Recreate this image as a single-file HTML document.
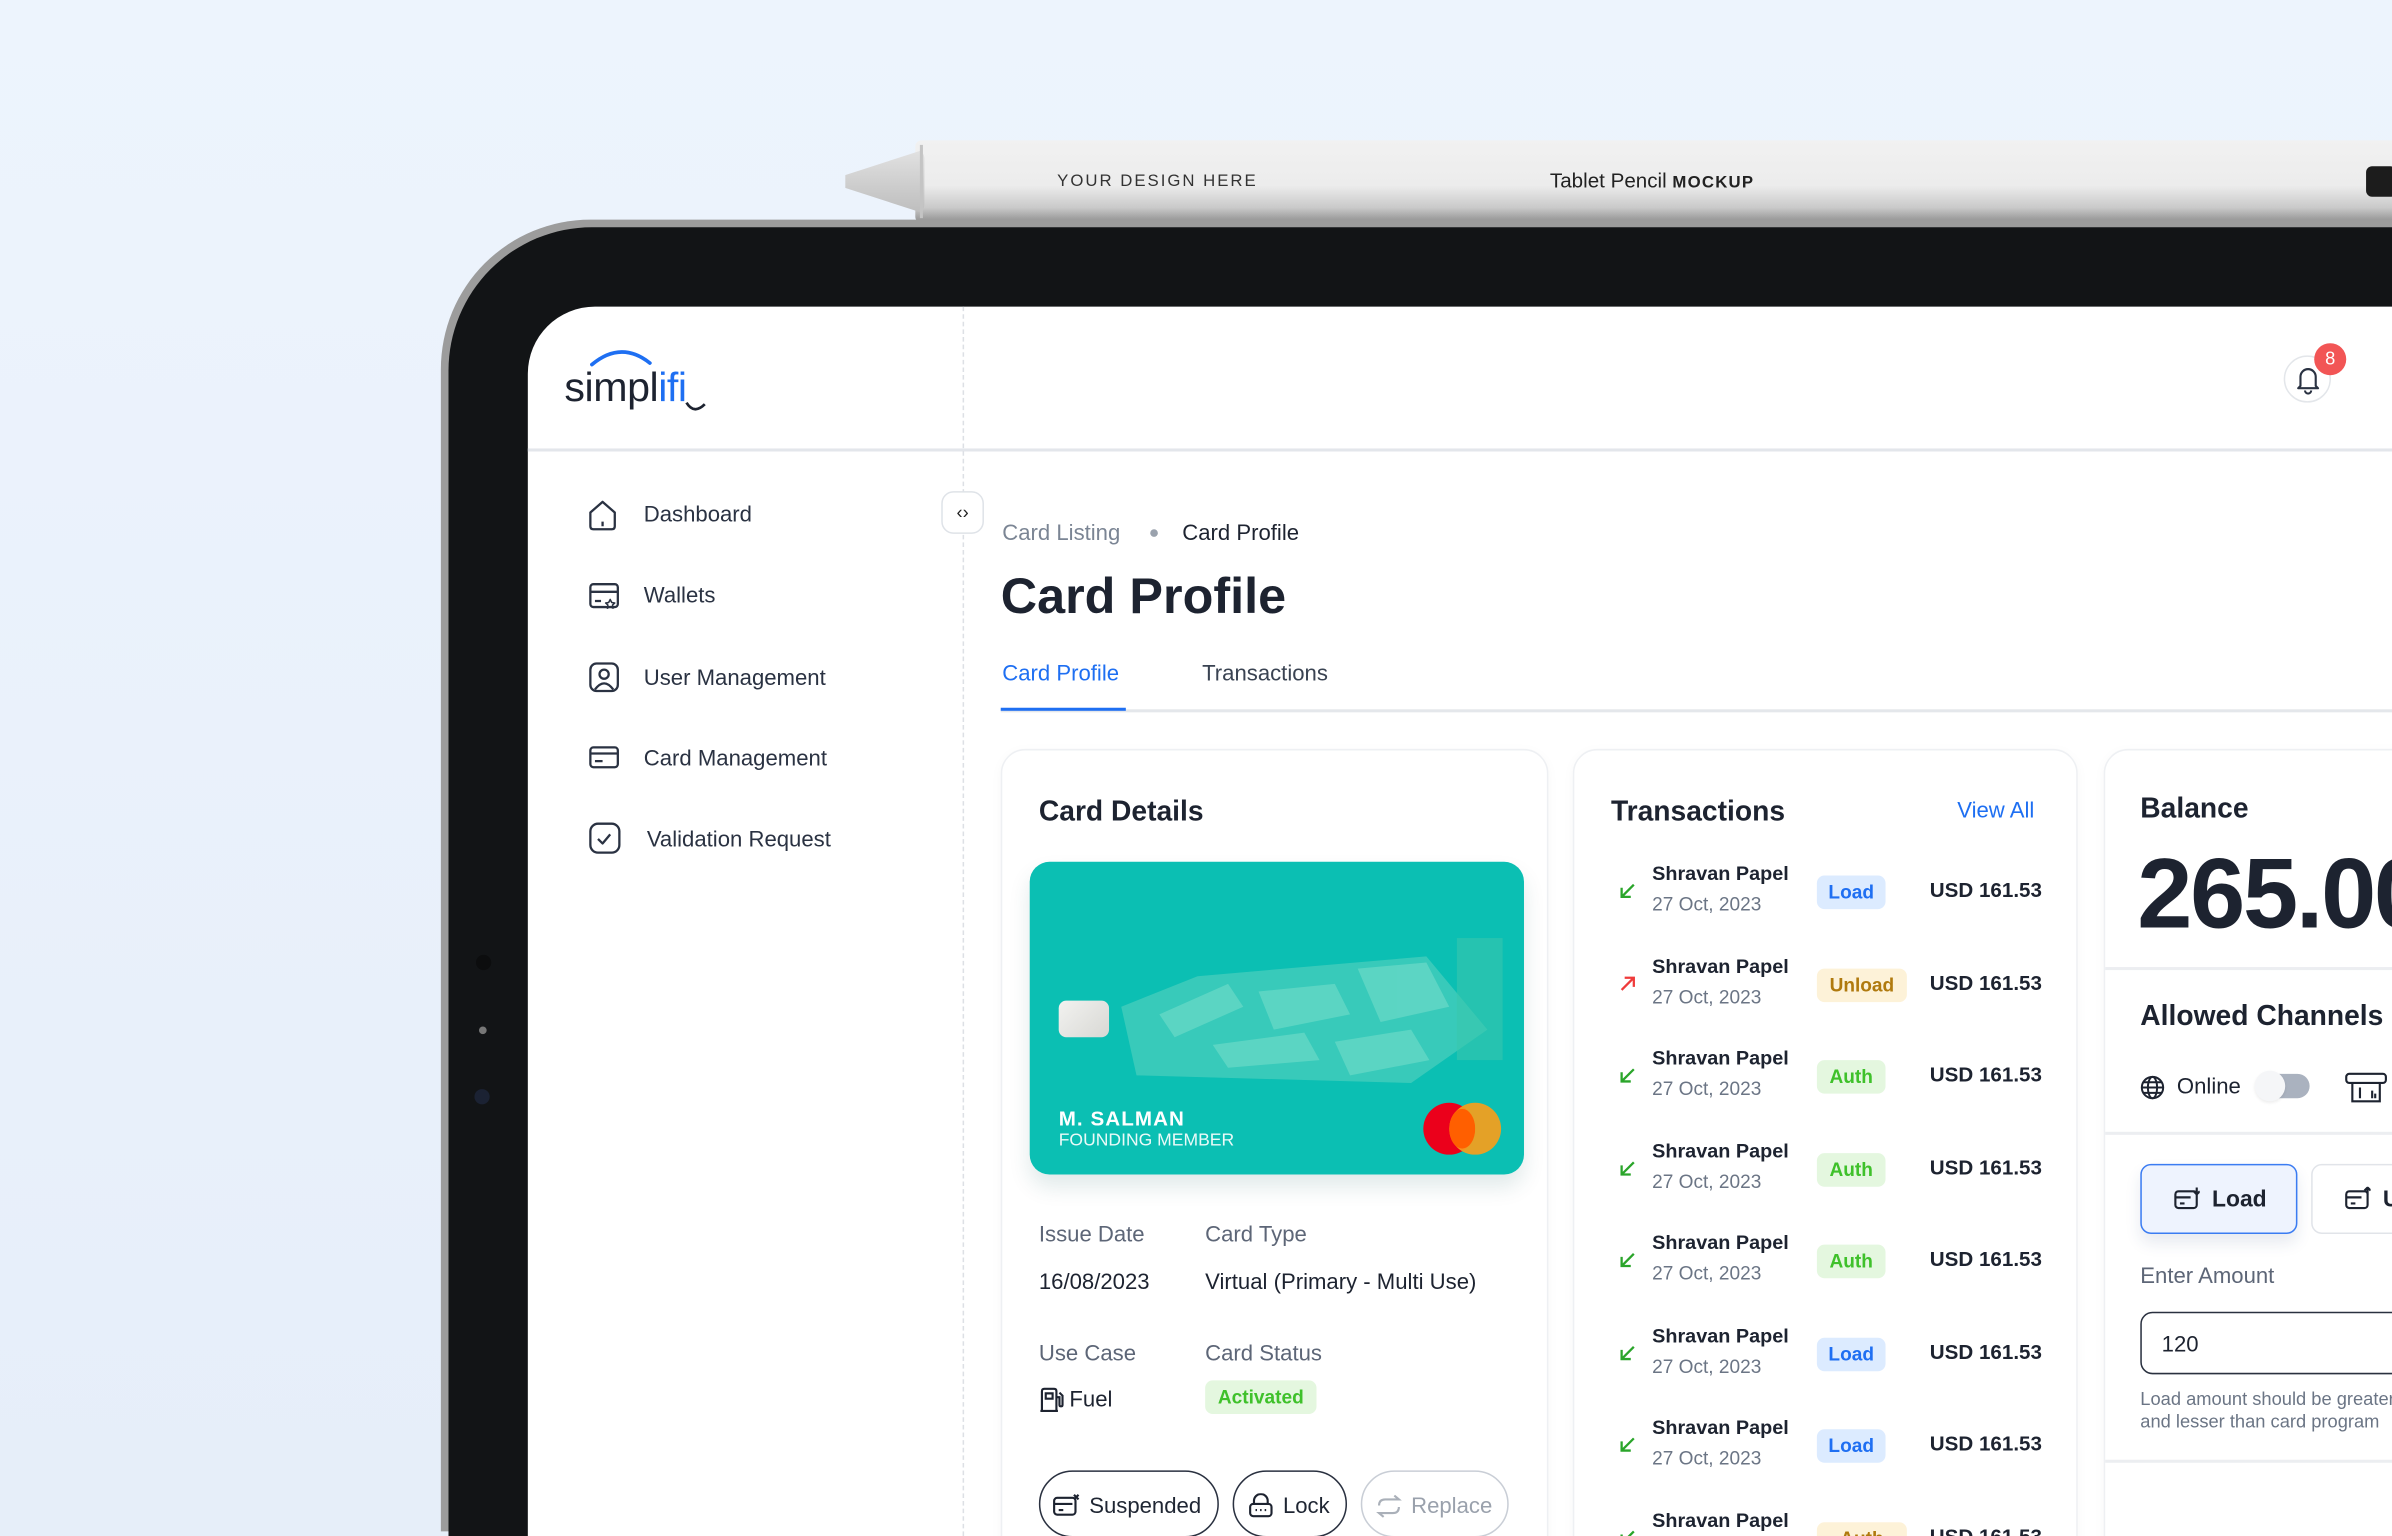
<!DOCTYPE html>
<html><head><meta charset="utf-8"><style>
html,body{margin:0;padding:0;width:2392px;height:1536px;overflow:hidden;background:#edf3fb}
#s{position:absolute;left:0;top:0;width:1568px;height:1007px;transform:scale(1.52551,1.52532);transform-origin:0 0;font-family:"Liberation Sans",sans-serif;color:#1f2633;overflow:hidden;background:linear-gradient(180deg,#edf4fd 0%,#e6eef9 100%)}
.a{position:absolute}
.t{position:absolute;white-space:nowrap}
.nav{font-size:14.5px;color:#2a3242}
.panel{position:absolute;background:#fff;border:1px solid #eef0f3;border-radius:16px;box-shadow:0 2px 8px rgba(20,30,50,.03)}
.h{font-weight:bold;font-size:18.5px;color:#1d2330}
.lbl{font-size:14.5px;color:#5d6677}
.val{font-size:14.5px;color:#1d2330}
.nm{font-size:13px;font-weight:bold;color:#1d2330}
.dt{font-size:12.5px;color:#6b7585}
.amt{font-size:13.5px;font-weight:bold;color:#1d2330}
.bd{position:absolute;height:22px;line-height:22px;border-radius:5px;font-size:12.5px;font-weight:bold;text-align:center}
.ld{background:#dcebff;color:#1f6ff2;width:45px}
.au{background:#e4f7df;color:#3fc12b;width:45px}
.ul{background:#fdf2d8;color:#b07a0e;width:59px}
.pill{position:absolute;height:44px;border:1.5px solid #2a3140;border-radius:23px;font-size:14.5px;line-height:44px;box-sizing:border-box}
</style></head><body><div id="s">

<!-- pencil -->
<div class="a" style="left:600px;top:92px;width:1000px;height:54px;background:linear-gradient(180deg,#f1f1f1 0%,#ececec 55%,#c9c9c9 82%,#8e8e8e 100%);border-radius:4px 0 0 4px"></div>
<div class="a" style="left:554px;top:98px;width:52px;height:42px;background:linear-gradient(180deg,#e2e2e2,#bdbdbd);clip-path:polygon(0 40%,100% 0,100% 100%,0 60%);border-radius:6px"></div>
<div class="a" style="left:603px;top:95px;width:2px;height:48px;background:#c4c4c4"></div>
<div class="t" style="left:693px;top:113px;font-size:11px;letter-spacing:1.3px;color:#333">YOUR DESIGN HERE</div>
<div class="t" style="left:1016px;top:111px;font-size:13.5px;color:#222">Tablet Pencil <b style="font-size:11px;letter-spacing:.8px">MOCKUP</b></div>
<div class="a" style="left:1551px;top:109px;width:20px;height:20px;background:#1c1c1c;border-radius:4px"></div>

<!-- tablet -->
<div class="a" style="left:289px;top:144px;width:1500px;height:860px;border-radius:98px 98px 0 0;background:#9c9c9c"></div>
<div class="a" style="left:294px;top:149px;width:1500px;height:858px;border-radius:94px 94px 0 0;background:#121416"></div>
<div class="a" style="left:312px;top:626px;width:10px;height:10px;border-radius:50%;background:#0c0d0e"></div>
<div class="a" style="left:314px;top:673px;width:5px;height:5px;border-radius:50%;background:#777"></div>
<div class="a" style="left:311px;top:714px;width:10px;height:10px;border-radius:50%;background:#1b2233"></div>
<div class="a" style="left:346px;top:201px;width:1240px;height:806px;border-radius:44px 0 0 0;background:#fff"></div>

<!-- header -->
<div class="a" style="left:346px;top:294px;width:1222px;height:1.5px;background:#e3e6eb"></div>
<div class="a" style="left:631px;top:201px;width:0;height:806px;border-left:1px dashed #dde0e5"></div>
<svg class="a" style="left:366px;top:222px" width="106" height="52"><path d="M22 17 Q41 1 60 16" stroke="#1e6ff2" stroke-width="2.4" fill="none" stroke-linecap="round"/><path d="M84 42 Q89 50 96 43" stroke="#1d2330" stroke-width="1.8" fill="none"/><text x="4" y="41" font-family="Liberation Sans,sans-serif" font-size="27" fill="#1d2330" letter-spacing="-.3">simpl<tspan fill="#1e6ff2">ifi</tspan></text></svg>
<div class="a" style="left:1497px;top:233px;width:31px;height:31px;border-radius:50%;border:1px solid #e3e6ea;box-sizing:border-box"></div>
<svg class="a" style="left:1504px;top:239px" width="18" height="20" viewBox="0 0 18 20"><path d="M4 14 V8 a5 5 0 0 1 10 0 V14 L15.5 15.5 H2.5 Z M7 17 a2 2 0 0 0 4 0" stroke="#2a3242" stroke-width="1.4" fill="none" stroke-linejoin="round"/></svg>
<div class="a" style="left:1517px;top:225px;width:21px;height:21px;border-radius:50%;background:#f25555;color:#fff;font-size:12px;text-align:center;line-height:21px">8</div>

<!-- sidebar -->
<svg class="a" style="left:384px;top:326px" width="24" height="240" fill="none" stroke="#2a3242" stroke-width="1.5" stroke-linejoin="round">
<path d="M3 10 L11 3 L19 10 V19 Q19 21 17 21 H5 Q3 21 3 19 Z M11 16 V19"/>
<rect x="3" y="57" width="18" height="15" rx="2"/><path d="M3 62 H21 M6 68 H10"/><path d="M16 67 l1 2 2 .3 -1.5 1.4 .4 2 -1.9-1 -1.9 1 .4-2 -1.5-1.4 2-.3z" stroke-width="1"/>
<rect x="3" y="109" width="18" height="18" rx="4"/><circle cx="12" cy="116" r="3"/><path d="M6 126 Q12 118 18 126"/>
<rect x="3" y="164" width="18" height="13" rx="2"/><path d="M3 168 H21 M6 173 H11"/>
<rect x="3" y="214" width="19" height="19" rx="5"/><path d="M8 224 L11 227 L16 221"/>
</svg>
<div class="t nav" style="left:422px;top:330px">Dashboard</div>
<div class="t nav" style="left:422px;top:383px">Wallets</div>
<div class="t nav" style="left:422px;top:437px">User Management</div>
<div class="t nav" style="left:422px;top:490px">Card Management</div>
<div class="t nav" style="left:424px;top:543px">Validation Request</div>
<div class="a" style="left:617px;top:322px;width:28px;height:28px;border:1px solid #dfe3e8;border-radius:8px;background:#fff;box-sizing:border-box;text-align:center;font-size:12px;line-height:26px;color:#222">&lsaquo;&rsaquo;</div>

<!-- main -->
<div class="t" style="left:657px;top:342px;font-size:14.5px;color:#7b8594">Card Listing</div>
<div class="a" style="left:754px;top:347px;width:5px;height:5px;border-radius:50%;background:#9aa2ad"></div>
<div class="t" style="left:775px;top:342px;font-size:14.5px;color:#1d2330">Card Profile</div>
<div class="t" style="left:656px;top:372px;font-size:33px;font-weight:bold;color:#1d2330">Card Profile</div>
<div class="t" style="left:657px;top:434px;font-size:14.5px;color:#1e6ff2">Card Profile</div>
<div class="t" style="left:788px;top:434px;font-size:14.5px;color:#3a4352">Transactions</div>
<div class="a" style="left:656px;top:465px;width:920px;height:1.5px;background:#e4e7eb"></div>
<div class="a" style="left:656px;top:464px;width:82px;height:2px;background:#1e6ff2"></div>

<!-- card details panel -->
<div class="panel" style="left:656px;top:491px;width:357px;height:530px"></div>
<div class="t h" style="left:681px;top:521px">Card Details</div>
<div class="a" style="left:675px;top:565px;width:324px;height:205px;border-radius:13px;background:#0bbfb3;overflow:hidden;box-shadow:0 8px 14px rgba(0,80,80,.12)">
<svg width="324" height="205" style="position:absolute;left:0;top:0"><g fill="#5fd3bf" opacity=".55"><polygon points="60,95 110,75 260,62 300,110 250,145 70,140"/></g><g fill="#7fe0cd" opacity=".5"><polygon points="85,100 130,80 140,95 95,115"/><polygon points="150,85 200,80 210,100 160,110"/><polygon points="215,70 260,66 275,95 230,105"/><polygon points="120,120 180,112 190,130 130,135"/><polygon points="200,118 250,110 262,130 210,140"/></g><g fill="#38c7ae" opacity=".6"><rect x="280" y="50" width="30" height="80"/></g></svg>
<div class="a" style="left:19px;top:91px;width:33px;height:24px;border-radius:5px;background:linear-gradient(135deg,#f2f2f0,#d8d8d4)"></div>
<div class="t" style="left:19px;top:161px;color:#fff;font-weight:bold;font-size:13.5px;letter-spacing:.7px">M. SALMAN</div>
<div class="t" style="left:19px;top:177px;color:#eafaf8;font-size:11.5px">FOUNDING MEMBER</div>
<div class="a" style="left:258px;top:158px;width:34px;height:34px;border-radius:50%;background:#eb001b"></div>
<div class="a" style="left:275px;top:158px;width:34px;height:34px;border-radius:50%;background:#f79e1b;opacity:.92"></div>
<div class="a" style="left:275px;top:162px;width:17px;height:26px;background:#ff5f00;clip-path:ellipse(50% 50%)"></div>
</div>
<div class="t lbl" style="left:681px;top:802px">Issue Date</div>
<div class="t lbl" style="left:790px;top:802px">Card Type</div>
<div class="t val" style="left:681px;top:833px">16/08/2023</div>
<div class="t val" style="left:790px;top:833px">Virtual (Primary - Multi Use)</div>
<div class="t lbl" style="left:681px;top:880px">Use Case</div>
<div class="t lbl" style="left:790px;top:880px">Card Status</div>
<svg class="a" style="left:681px;top:909px" width="17" height="17" fill="none" stroke="#1d2330" stroke-width="1.4"><path d="M2 16 V3 Q2 1.5 3.5 1.5 H10 Q11.5 1.5 11.5 3 V16 M1 16 H12.5 M4.5 4.5 H9 V8 H4.5 Z M11.5 7 H13.5 V12 Q13.5 13 14.5 13 Q15.5 13 15.5 12 V6 L13.5 4"/></svg>
<div class="t val" style="left:701px;top:910px">Fuel</div>
<div class="a" style="left:790px;top:905px;width:73px;height:22px;border-radius:5px;background:#e4f7df;color:#3fc12b;font-size:12.5px;font-weight:bold;text-align:center;line-height:22px">Activated</div>
<div class="pill" style="left:681px;top:964px;width:118px;padding-left:32px;line-height:46px">Suspended</div>
<svg class="a" style="left:690px;top:979px" width="18" height="16" fill="none" stroke="#1d2330" stroke-width="1.4"><rect x="1" y="3" width="14" height="11" rx="2"/><path d="M1 7 H13 M4 11 H7 M14 1 l3 3 M17 1 l-3 3"/></svg>
<div class="pill" style="left:808px;top:964px;width:75px;padding-left:32px;line-height:46px">Lock</div>
<svg class="a" style="left:818px;top:979px" width="17" height="16" fill="none" stroke="#1d2330" stroke-width="1.4"><path d="M4 7 V5 a4.5 4.5 0 0 1 9 0 V7"/><rect x="1.5" y="7" width="14" height="8" rx="2"/><path d="M5 11 h1 M8 11 h1 M11 11 h1"/></svg>
<div class="pill" style="left:892px;top:964px;width:97px;padding-left:32px;border-color:#c9ced6;color:#9aa1ac;line-height:46px">Replace</div>
<svg class="a" style="left:902px;top:980px" width="17" height="15" fill="none" stroke="#aab0b9" stroke-width="1.4"><path d="M2 7 Q2 3 6 3 H15 L12 0.5 M15 8 Q15 12 11 12 H2 L5 14.5"/></svg>

<!-- transactions panel -->
<div class="panel" style="left:1031px;top:491px;width:329px;height:530px"></div>
<div class="t h" style="left:1056px;top:521px">Transactions</div>
<div class="t" style="left:1283px;top:524px;font-size:14.5px;color:#1e6ff2">View All</div>

<div id="tx"></div>

<!-- balance panel -->
<div class="panel" style="left:1379px;top:491px;width:300px;height:530px"></div>
<div class="t h" style="left:1403px;top:519px">Balance</div>
<div class="t" style="left:1401px;top:548px;font-size:65px;font-weight:bold;color:#1d2330;letter-spacing:-1.5px">265.00</div>
<div class="a" style="left:1380px;top:634px;width:200px;height:1.5px;background:#eceef1"></div>
<div class="t h" style="left:1403px;top:655px">Allowed Channels</div>
<svg class="a" style="left:1403px;top:705px" width="16" height="16" fill="none" stroke="#1d2330" stroke-width="1.3"><circle cx="8" cy="8" r="7"/><ellipse cx="8" cy="8" rx="3" ry="7"/><path d="M1 8 H15 M2 4.5 H14 M2 11.5 H14"/></svg>
<div class="t val" style="left:1427px;top:705px">Online</div>
<div class="a" style="left:1481px;top:704px;width:33px;height:16px;border-radius:8px;background:#aab2bf"></div>
<div class="a" style="left:1478px;top:702px;width:20px;height:20px;border-radius:50%;background:#f5f6f8;box-shadow:0 1px 2px rgba(0,0,0,.08)"></div>
<svg class="a" style="left:1537px;top:703px" width="30" height="20" fill="none" stroke="#1d2330" stroke-width="1.4"><rect x="1" y="1" width="26" height="6" rx="2"/><path d="M5 7 V19 H23 V7 M10 10 V17 M18 12 V17 M20 14 V17"/></svg>
<div class="a" style="left:1380px;top:742px;width:200px;height:1.5px;background:#eceef1"></div>
<div class="a" style="left:1403px;top:763px;width:103px;height:46px;border:1.5px solid #3b7cf2;border-radius:7px;background:#eef3fe;box-sizing:border-box;box-shadow:0 6px 10px rgba(30,60,120,.1)"></div>
<svg class="a" style="left:1425px;top:778px" width="17" height="16" fill="none" stroke="#1d2330" stroke-width="1.4"><rect x="1" y="3" width="14" height="11" rx="2"/><path d="M1 7 H11 M4 11 H7 M15 0.5 V5 M13 3 L15 5 17 3"/></svg>
<div class="t" style="left:1450px;top:778px;font-size:15px;font-weight:bold;color:#1d2330">Load</div>
<div class="a" style="left:1515px;top:763px;width:100px;height:46px;border:1.5px solid #e1e4e9;border-radius:7px;background:#fff;box-sizing:border-box"></div>
<svg class="a" style="left:1537px;top:778px" width="17" height="16" fill="none" stroke="#1d2330" stroke-width="1.4"><rect x="1" y="3" width="14" height="11" rx="2"/><path d="M1 7 H11 M4 11 H7 M15 5 V0.5 M13 2.5 L15 0.5 17 2.5"/></svg>
<div class="t" style="left:1562px;top:778px;font-size:15px;font-weight:bold;color:#1d2330">U</div>
<div class="t lbl" style="left:1403px;top:829px">Enter Amount</div>
<div class="a" style="left:1403px;top:860px;width:300px;height:41px;border:1.3px solid #2a3140;border-radius:8px;box-sizing:border-box"></div>
<div class="t val" style="left:1417px;top:874px">120</div>
<div class="t" style="left:1403px;top:910px;font-size:12px;color:#6b7585;line-height:14.5px">Load amount should be greater<br>and lesser than card program</div>
<div class="a" style="left:1380px;top:957px;width:200px;height:1.5px;background:#eceef1"></div>

<script>
var rows=[["ld","Load","g"],["ul","Unload","r"],["au","Auth","g"],["au","Auth","g"],["au","Auth","g"],["ld","Load","g"],["ld","Load","g"],["ul","Auth","g"]];
var h="";
rows.forEach(function(r,i){var y=565+i*60.5;
var arrow=r[2]=="g"?'<path d="M10 2 L2 10 M2 4 V10 H8" stroke="#2aa52a"/>':'<path d="M2 10 L10 2 M4 2 H10 V8" stroke="#ef3b3b"/>';
h+='<svg class="a" style="left:1061px;top:'+(y+13)+'px" width="12" height="12" fill="none" stroke-width="1.5">'+arrow+'</svg>';
h+='<div class="t nm" style="left:1083px;top:'+y+'px">Shravan Papel</div>';
h+='<div class="t dt" style="left:1083px;top:'+(y+21)+'px">27 Oct, 2023</div>';
h+='<div class="bd '+r[0]+'" style="left:1191px;top:'+(y+9)+'px">'+r[1]+'</div>';
h+='<div class="t amt" style="left:1265px;top:'+(y+11)+'px">USD 161.53</div>';});
document.getElementById("tx").outerHTML=h;
</script>
</div></body></html>
